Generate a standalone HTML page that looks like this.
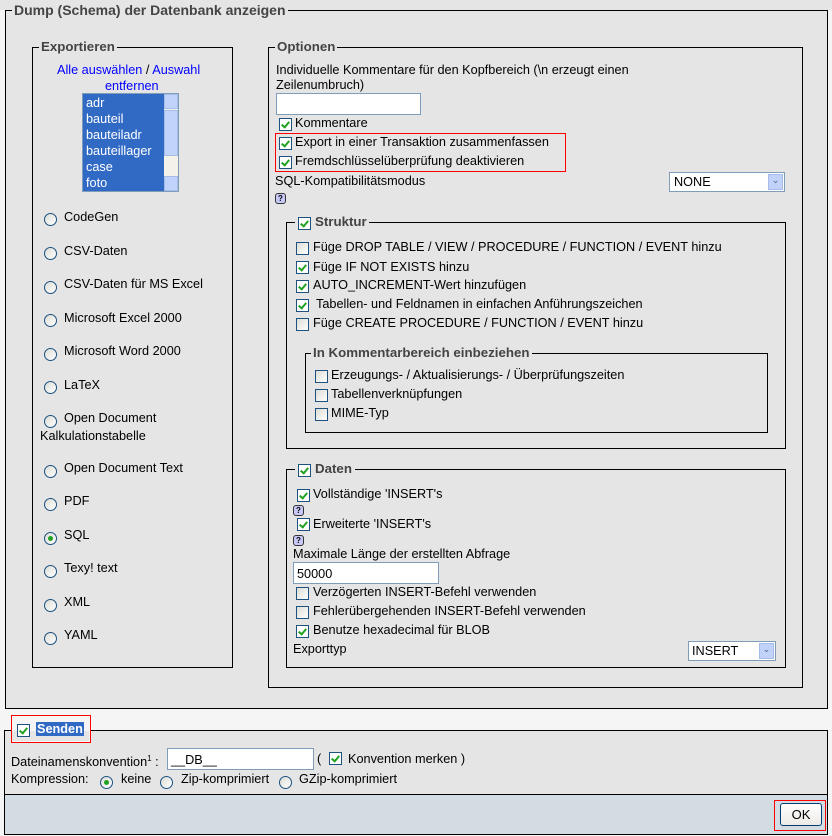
<!DOCTYPE html>
<html><head><meta charset="utf-8"><style>
body{margin:0;width:832px;height:836px;background:#f5f5f5;font-family:"Liberation Sans",sans-serif;font-size:12.7px;color:#000;position:relative;overflow:hidden}
div,span{position:absolute;white-space:nowrap}
.box{border:1px solid #000}
.lg{font-weight:bold;color:#444;background:#e5e5e5;padding:0 2px;font-size:13.3px}
.t{line-height:14px}
.cb{width:11px;height:11px;border:1px solid #1c5180;background:#fff}
.cb.on::after{content:"";position:absolute;left:3px;top:1px;width:3px;height:6px;border:solid #21a121;border-width:0 2px 2px 0;transform:rotate(40deg)}
.cb.off{background:linear-gradient(135deg,#dcdcd6,#fff)}
.rd{width:11px;height:11px;border:1px solid #1c5180;border-radius:50%;background:linear-gradient(135deg,#dcdcd6,#fff)}
.rd.on::after{content:"";position:absolute;left:3px;top:3px;width:5px;height:5px;border-radius:50%;background:#21a121}
.hp{width:9px;height:9px;border:1px solid #333;border-radius:3px;background:#c8c8f8;font-size:8px;line-height:9px;text-align:center;font-weight:bold}
.inp{background:#fff;border:1px solid #7f9db9}
.sel{background:#fff;border:1px solid #7f9db9}
.arr{right:1px;top:1px;width:15px;bottom:1px;background:#c1d3fb;border:1px solid #a5bbe8;box-sizing:border-box;font-size:9px;text-align:center;color:#4d6185}
.red{border:1px solid #ff0000}
</style></head><body>
<div style="left:0;top:0;width:832px;height:10px;background:#e5e5e5"></div>
<div style="left:5px;top:10px;width:821px;height:697px;background:#e5e5e5" class="box"></div>
<span class="lg t" style="left:12px;top:3px;font-size:14px">Dump (Schema) der Datenbank anzeigen</span>

<div class="box" style="left:32px;top:47px;width:199px;height:619px"></div>
<span class="lg t" style="left:39px;top:40px">Exportieren</span>
<span class="t" style="left:57px;top:63px;color:#00f">Alle auswählen <span style="position:static;color:#000">/</span> Auswahl</span>
<span class="t" style="left:105px;top:79px;color:#00f">entfernen</span>
<div style="left:82px;top:93px;width:97px;height:99px;background:#316ac5;border:1px solid #7f9db9;box-sizing:border-box"></div>
<div style="left:164px;top:94px;width:14px;height:97px;background:#f3f1e8"></div>
<div style="left:164px;top:94px;width:14px;height:15px;background:#c1d3fb;border:1px solid #a5bbe8;box-sizing:border-box"></div>
<div style="left:164px;top:110px;width:14px;height:46px;background:#c1d3fb;border:1px solid #a5bbe8;box-sizing:border-box"></div>
<div style="left:164px;top:176px;width:14px;height:15px;background:#c1d3fb;border:1px solid #a5bbe8;box-sizing:border-box"></div>
<div class="t" style="left:86px;top:95px;color:#fff;line-height:16px">adr<br>bauteil<br>bauteiladr<br>bauteillager<br>case<br>foto</div>
<div class="rd" style="left:44px;top:213px"></div><span class="t" style="left:64px;top:210px">CodeGen</span>
<div class="rd" style="left:44px;top:247px"></div><span class="t" style="left:64px;top:244px">CSV-Daten</span>
<div class="rd" style="left:44px;top:281px"></div><span class="t" style="left:64px;top:277px">CSV-Daten für MS Excel</span>
<div class="rd" style="left:44px;top:314px"></div><span class="t" style="left:64px;top:311px">Microsoft Excel 2000</span>
<div class="rd" style="left:44px;top:348px"></div><span class="t" style="left:64px;top:344px">Microsoft Word 2000</span>
<div class="rd" style="left:44px;top:381px"></div><span class="t" style="left:64px;top:378px">LaTeX</span>
<div class="rd" style="left:44px;top:415px"></div><span class="t" style="left:64px;top:411px">Open Document</span>
<span class="t" style="left:40px;top:429px">Kalkulationstabelle</span>
<div class="rd" style="left:44px;top:465px"></div><span class="t" style="left:64px;top:461px">Open Document Text</span>
<div class="rd" style="left:44px;top:498px"></div><span class="t" style="left:64px;top:494px">PDF</span>
<div class="rd on" style="left:44px;top:532px"></div><span class="t" style="left:64px;top:528px">SQL</span>
<div class="rd" style="left:44px;top:565px"></div><span class="t" style="left:64px;top:561px">Texy! text</span>
<div class="rd" style="left:44px;top:599px"></div><span class="t" style="left:64px;top:595px">XML</span>
<div class="rd" style="left:44px;top:632px"></div><span class="t" style="left:64px;top:628px">YAML</span>

<div class="box" style="left:268px;top:47px;width:533px;height:639px"></div>
<span class="lg t" style="left:275px;top:40px">Optionen</span>
<span class="t" style="left:276px;top:63px">Individuelle Kommentare für den Kopfbereich (\n erzeugt einen</span>
<span class="t" style="left:276px;top:78px">Zeilenumbruch)</span>
<div class="inp" style="left:276px;top:93px;width:143px;height:20px"></div>
<div class="cb on" style="left:279px;top:118px"></div><span class="t" style="left:295px;top:116px">Kommentare</span>
<div class="red" style="left:275px;top:133px;width:289px;height:37px"></div>
<div class="cb on" style="left:279px;top:137px"></div><span class="t" style="left:295px;top:135px">Export in einer Transaktion zusammenfassen</span>
<div class="cb on" style="left:279px;top:156px"></div><span class="t" style="left:295px;top:154px">Fremdschlüsselüberprüfung deaktivieren</span>
<span class="t" style="left:275px;top:174px">SQL-Kompatibilitätsmodus</span>
<div class="hp" style="left:275px;top:193px">?</div>
<div class="sel" style="left:669px;top:172px;width:114px;height:18px"><span class="t" style="left:4px;top:2px">NONE</span><div class="arr">⌄</div></div>

<div class="box" style="left:286px;top:222px;width:498px;height:225px"></div>
<div style="left:295px;top:215px;width:74px;height:14px;background:#e5e5e5"></div>
<div class="cb on" style="left:298px;top:217px"></div><span class="lg t" style="left:313px;top:215px">Struktur</span>
<div class="cb off" style="left:296px;top:242px"></div><span class="t" style="left:313px;top:240px">Füge DROP TABLE / VIEW / PROCEDURE / FUNCTION / EVENT hinzu</span>
<div class="cb on" style="left:296px;top:261px"></div><span class="t" style="left:313px;top:260px">Füge IF NOT EXISTS hinzu</span>
<div class="cb on" style="left:296px;top:280px"></div><span class="t" style="left:313px;top:278px">AUTO_INCREMENT-Wert hinzufügen</span>
<div class="cb on" style="left:296px;top:299px"></div><span class="t" style="left:316px;top:297px">Tabellen- und Feldnamen in einfachen Anführungszeichen</span>
<div class="cb off" style="left:296px;top:318px"></div><span class="t" style="left:313px;top:316px">Füge CREATE PROCEDURE / FUNCTION / EVENT hinzu</span>
<div class="box" style="left:305px;top:353px;width:461px;height:78px"></div>
<span class="lg t" style="left:311px;top:346px">In Kommentarbereich einbeziehen</span>
<div class="cb off" style="left:315px;top:370px"></div><span class="t" style="left:331px;top:368px">Erzeugungs- / Aktualisierungs- / Überprüfungszeiten</span>
<div class="cb off" style="left:315px;top:389px"></div><span class="t" style="left:331px;top:387px">Tabellenverknüpfungen</span>
<div class="cb off" style="left:315px;top:408px"></div><span class="t" style="left:331px;top:406px">MIME-Typ</span>

<div class="box" style="left:286px;top:469px;width:498px;height:197px"></div>
<div style="left:295px;top:462px;width:60px;height:14px;background:#e5e5e5"></div>
<div class="cb on" style="left:298px;top:464px"></div><span class="lg t" style="left:313px;top:462px">Daten</span>
<div class="cb on" style="left:297px;top:489px"></div><span class="t" style="left:313px;top:487px">Vollständige 'INSERT's</span>
<div class="hp" style="left:293px;top:505px">?</div>
<div class="cb on" style="left:297px;top:518px"></div><span class="t" style="left:313px;top:517px">Erweiterte 'INSERT's</span>
<div class="hp" style="left:293px;top:535px">?</div>
<span class="t" style="left:293px;top:547px">Maximale Länge der erstellten Abfrage</span>
<div class="inp" style="left:293px;top:562px;width:144px;height:20px"><span class="t" style="left:3px;top:4px">50000</span></div>
<div class="cb off" style="left:296px;top:587px"></div><span class="t" style="left:313px;top:585px">Verzögerten INSERT-Befehl verwenden</span>
<div class="cb off" style="left:296px;top:606px"></div><span class="t" style="left:313px;top:604px">Fehlerübergehenden INSERT-Befehl verwenden</span>
<div class="cb on" style="left:296px;top:625px"></div><span class="t" style="left:313px;top:623px">Benutze hexadecimal für BLOB</span>
<span class="t" style="left:293px;top:642px">Exporttyp</span>
<div class="sel" style="left:688px;top:641px;width:86px;height:18px"><span class="t" style="left:3px;top:2px">INSERT</span><div class="arr">⌄</div></div>

<div class="box" style="left:4px;top:730px;width:822px;height:103px;background:#e5e5e5"></div>
<div class="box" style="left:4px;top:794px;width:822px;height:39px;background:#d3dbe3"></div>
<div class="red" style="left:11px;top:715px;width:78px;height:26px;background:#f5f5f5"></div>
<div style="left:12px;top:731px;width:77px;height:10px;background:#e5e5e5"></div>
<div class="cb on" style="left:17px;top:724px"></div>
<span class="t" style="left:36px;top:722px;background:#316ac5;color:#fff;font-weight:bold;padding:0 1px">Senden</span>
<span class="t" style="left:11px;top:752px">Dateinamenskonvention<sup style="font-size:8px">1</sup> :</span>
<div class="inp" style="left:167px;top:748px;width:145px;height:20px"><span class="t" style="left:3px;top:4px">__DB__</span></div>
<span class="t" style="left:317px;top:752px">(</span>
<div class="cb on" style="left:329px;top:752px"></div><span class="t" style="left:348px;top:752px">Konvention merken )</span>
<span class="t" style="left:11px;top:772px">Kompression:</span>
<div class="rd on" style="left:100px;top:776px"></div><span class="t" style="left:121px;top:772px">keine</span>
<div class="rd" style="left:160px;top:776px"></div><span class="t" style="left:181px;top:772px">Zip-komprimiert</span>
<div class="rd" style="left:279px;top:776px"></div><span class="t" style="left:299px;top:772px">GZip-komprimiert</span>
<div class="red" style="left:774px;top:800px;width:50px;height:29px"></div>
<div style="left:780px;top:803px;width:40px;height:21px;border:1px solid #003c74;border-radius:3px;background:linear-gradient(#fff,#ecebe6);text-align:center;line-height:21px;font-size:13px">OK</div>
</body></html>
